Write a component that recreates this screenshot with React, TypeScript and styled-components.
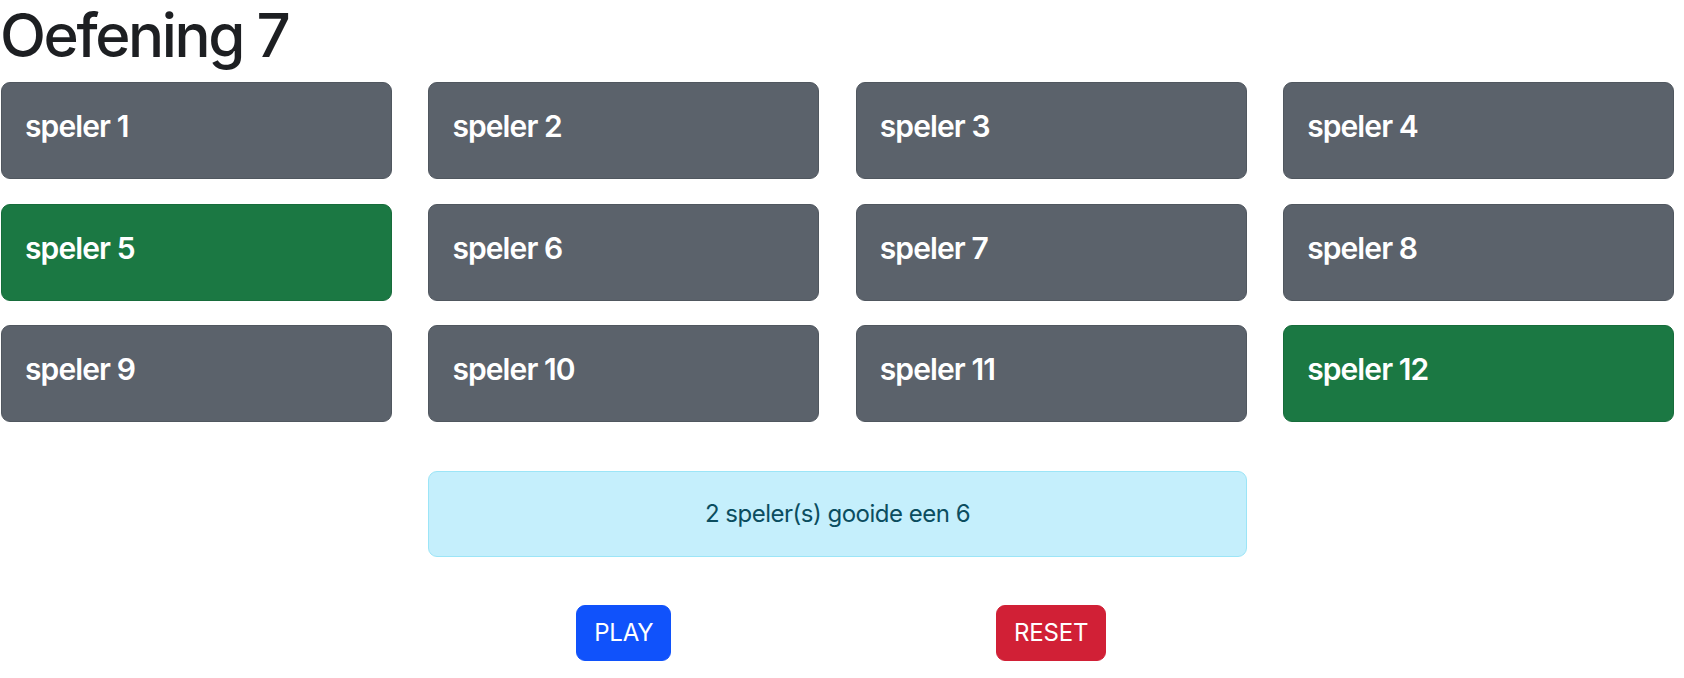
import React from "react";
import styled, { createGlobalStyle } from "styled-components";

const GlobalStyle = createGlobalStyle`
  html, body {
    margin: 0;
    padding: 0;
    background: #ffffff;
  }
  body {
    font-family: Inter, "Noto Sans", "Liberation Sans", sans-serif;
    color: #1d1f22;
  }
  * { box-sizing: border-box; }
`;

const Page = styled.main`
  padding: 0 10px 0 1px;
`;

const Title = styled.h1`
  margin: 0 0 12px -1px;
  font-size: 60px;
  font-weight: 500;
  line-height: 70px;
  letter-spacing: -2.4px;
  color: #1d1f22;
`;

const Board = styled.section`
  display: grid;
  grid-template-columns: repeat(4, 1fr);
  column-gap: 36.5px;
  row-gap: 24.5px;
`;

const PlayerCard = styled.div<{ $winner: boolean }>`
  height: 97px;
  padding: 25px 23px;
  border-radius: 9px;
  border: 1px solid ${(p) => (p.$winner ? "#176c3b" : "#50575f")};
  background: ${(p) => (p.$winner ? "#1b7843" : "#5b626b")};
  color: #ffffff;
  font-size: 30px;
  font-weight: 600;
  line-height: 36px;
  letter-spacing: -0.9px;
`;

const Result = styled.div`
  grid-column: 2 / 4;
  margin-top: 24.5px;
  padding: 24px;
  border: 1px solid #9ce5f7;
  border-radius: 9px;
  background: #c5effc;
  color: #0b4d5f;
  font-size: 24px;
  line-height: 36px;
  text-align: center;
  letter-spacing: -0.5px;
`;

const ActionButton = styled.button<{ $tone: "play" | "reset" }>`
  grid-column: ${(p) => (p.$tone === "play" ? 2 : 3)};
  justify-self: center;
  margin-top: 23.5px;
  height: 56px;
  padding: 9px 17px;
  border: 1px solid ${(p) => (p.$tone === "play" ? "#1052fb" : "#d12036")};
  border-radius: 9px;
  background: ${(p) => (p.$tone === "play" ? "#1052fb" : "#d12036")};
  color: #ffffff;
  font-family: Inter, "Noto Sans", "Liberation Sans", sans-serif;
  font-size: 24px;
  font-weight: 400;
  line-height: 36px;
  letter-spacing: -0.2px;
  cursor: pointer;
`;

const winners = new Set([5, 12]);
const players = Array.from({ length: 12 }, (_, i) => i + 1);

export default function App() {
  return (
    <>
      <GlobalStyle />
      <Page>
        <Title>Oefening 7</Title>
        <Board>
          {players.map((n) => (
            <PlayerCard key={n} $winner={winners.has(n)}>
              speler {n}
            </PlayerCard>
          ))}
          <Result>2 speler(s) gooide een 6</Result>
          <ActionButton $tone="play">PLAY</ActionButton>
          <ActionButton $tone="reset">RESET</ActionButton>
        </Board>
      </Page>
    </>
  );
}
